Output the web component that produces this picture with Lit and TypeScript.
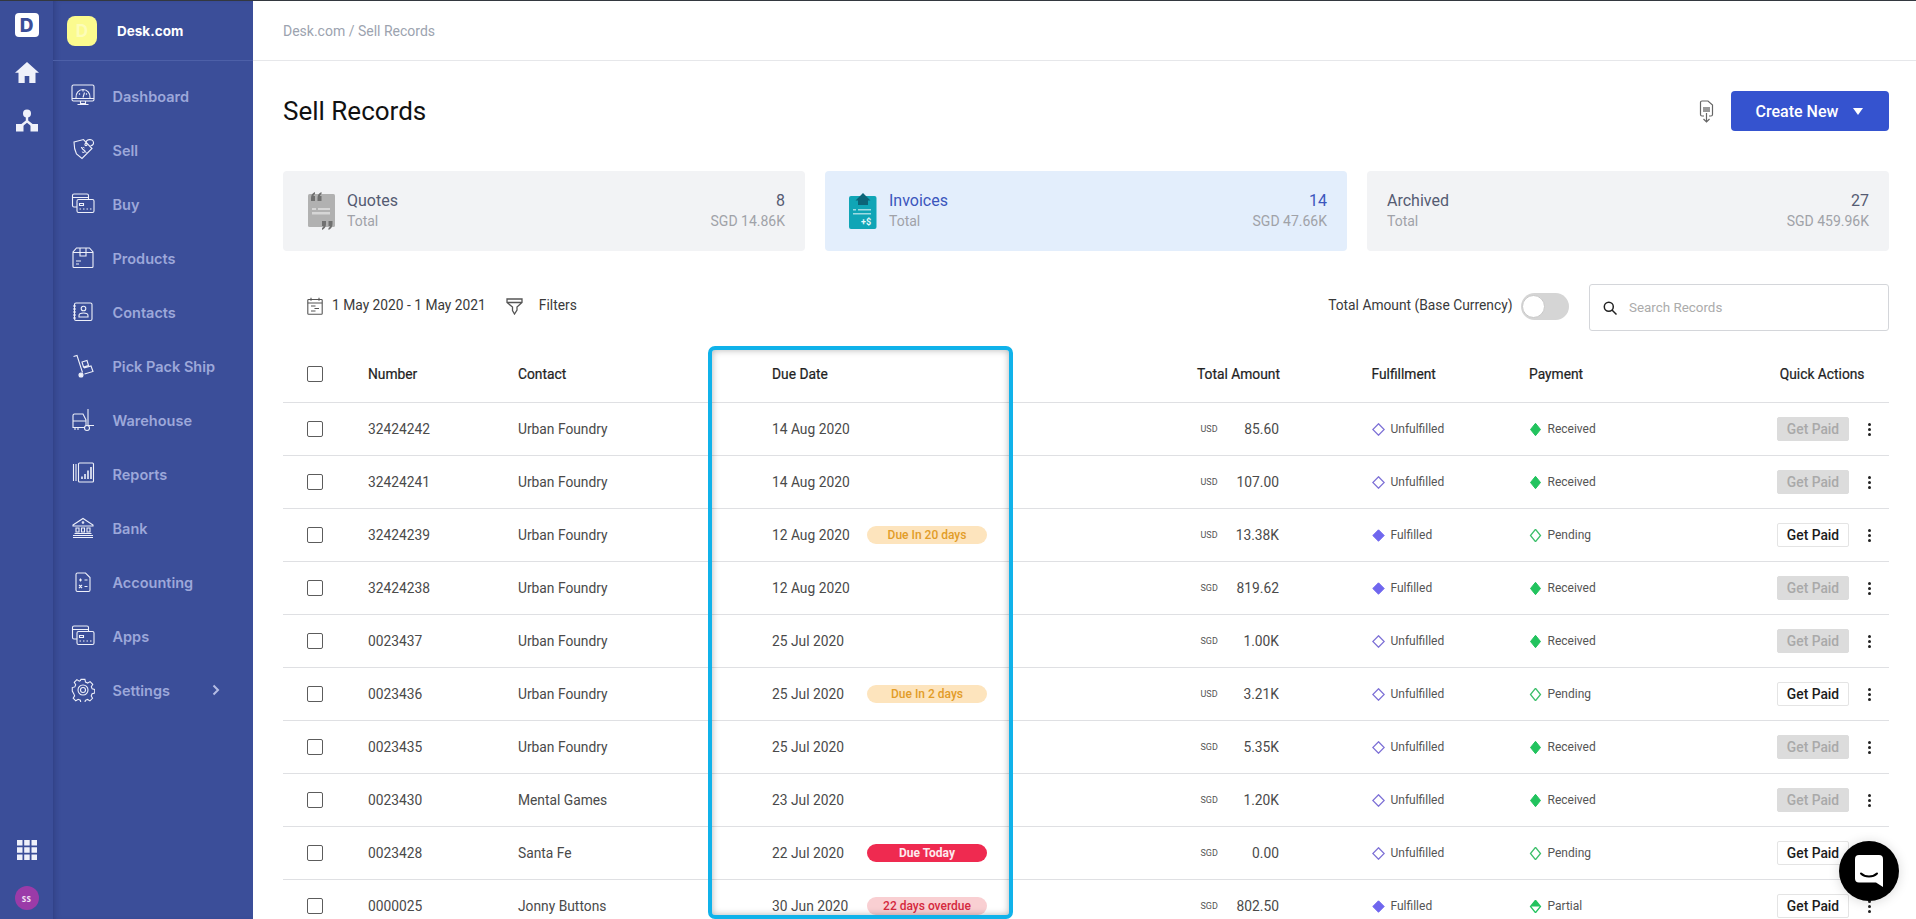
import { LitElement, html, css, svg } from "lit";
import { customElement } from "lit/decorators.js";

const navIcons: Record<string, unknown> = {
  dashboard: svg`<rect x="1" y="1" width="22" height="16" rx="1.5"/><path d="M1 14.5h22M5 14c-.6-5 3-8.5 7-8.5s7.6 3.5 7 8.5M12 13.500l1.500-5M8 9.500l1 1M16 9.500l-1 1M12 6v1.500"/><path d="M9.500 17v2.500h5V17M6.500 20.500h11"/>`,
  sell: svg`<path d="M3 4 12.500 1.500 21 10.500 11 20.500 5.500 16C3.500 12 3 8.500 3 4Z"/><circle cx="15" cy="6.500" r="1.100"/><path d="M15 5.500c-.5-4.500 7-5.500 7.500-1 .2 2-1.500 3-3 3.200"/><path d="M13.500 10c-1.200-1.200-3 0-2.200 1.200s2.800.4 2.800 1.800-2 2-3.200.8M10 9l5.500 6" stroke-width="1"/>`,
  buy: svg`<path d="M6 15H3a1.500 1.500 0 0 1-1.500-1.500V3.500A1.500 1.500 0 0 1 3 2h13a1.500 1.500 0 0 1 1.500 1.500V7M1.500 5.500h16"/><rect x="6" y="7.500" width="17" height="13" rx="1.500"/><path d="M8.500 11.500h4v2h-4zM8.500 17h1.500M12 17h1.500M15.500 17h1.500M19 17h1.500"/>`,
  products: svg`<path d="M5.500 2h13L22 6v14.500a1 1 0 0 1-1 1H3a1 1 0 0 1-1-1V6L5.500 2ZM2 6.500h20"/><path d="M9 2v8h6V2M5 15h5M5 18h3"/>`,
  contacts: svg`<rect x="3.500" y="3" width="17.500" height="17.500" rx="1.500"/><path d="M2 6h3M2 9h3M2 12h3M2 15h3M2 18h3"/><circle cx="12.500" cy="8.500" r="2.300"/><path d="M8 17v-1.500c0-1.500 2-2.500 4.500-2.500s4.500 1 4.500 2.500V17Z"/>`,
  pick: svg`<path d="M2.500 2.500 6 1.500l5.500 17"/><circle cx="10" cy="21" r="2" fill="currentColor"/><path d="m11 8 5-1.500 1.500 5-5 1.500ZM13 14l7-2 2 5.500-8.500 2.500"/>`,
  warehouse: svg`<path d="M17 1v16.500M17 17.500h6M2 20V7.500a1.500 1.500 0 0 1 1.500-1.500H12l3 6v6"/><path d="M2 13h13M2 19.500h11"/><circle cx="16" cy="20" r="2.500"/><path d="M4 22v-2M7 22v-2"/>`,
  reports: svg`<path d="M2.500 2v17M5 2v17"/><rect x="7.500" y="1" width="15" height="19" rx="1"/><path d="M11 17v-2.500M14 17v-5M17 17V8.500M20 17V5" stroke-width="1.600"/>`,
  bank: svg`<path d="M2 9 12 2.500 22 9v1H2ZM2 21.500h20M2 19.500h20M3.500 17.500h17"/><path d="M5 12h3v4H5zM10.500 12h3v4h-3zM16 12h3v4h-3z"/><circle cx="12" cy="6.500" r=".8"/>`,
  accounting: svg`<path d="M6.500 3h8l4.500 4.500v12.500a1.500 1.500 0 0 1-1.500 1.500h-11A1.500 1.500 0 0 1 5 20V4.500A1.500 1.500 0 0 1 6.500 3Z"/><path d="M8 10h3M9.500 8.500v3M13.500 10h3M8 15l3 3M11 15l-3 3M13.500 16.500h3M15 15v.1M15 18v.1"/>`,
  settings: svg`<path d="M10 2h4l.6 2.800 2.200 1 2.500-1.500 2.700 2.800-1.500 2.400.9 2.200 2.600.7v3.600l-2.700.7-.9 2.200 1.400 2.400-2.700 2.700-2.400-1.500-2.200.9-.6 2.600h-4l-.6-2.700-2.200-.9-2.400 1.500-2.700-2.700 1.500-2.400-.9-2.200L1.100 14v-3.600l2.600-.7.9-2.200L3.100 5.100l2.700-2.800 2.400 1.500 1.200-.6Z" transform="translate(.2 -.6) scale(.98)"/><circle cx="12" cy="12" r="5"/><circle cx="12" cy="12" r="2.500"/>`,
};

const nav = [
  ["Dashboard", "dashboard"], ["Sell", "sell"], ["Buy", "buy"], ["Products", "products"],
  ["Contacts", "contacts"], ["Pick Pack Ship", "pick"], ["Warehouse", "warehouse"], ["Reports", "reports"],
  ["Bank", "bank"], ["Accounting", "accounting"], ["Apps", "buy"], ["Settings", "settings"],
];

type Row = [string, string, string, string, string, string, string, string, string];
const rows: Row[] = [
  ["32424242", "Urban Foundry", "14 Aug 2020", "", "USD", "85.60", "Unfulfilled", "Received", "off"],
  ["32424241", "Urban Foundry", "14 Aug 2020", "", "USD", "107.00", "Unfulfilled", "Received", "off"],
  ["32424239", "Urban Foundry", "12 Aug 2020", "soon:Due In 20 days", "USD", "13.38K", "Fulfilled", "Pending", "on"],
  ["32424238", "Urban Foundry", "12 Aug 2020", "", "SGD", "819.62", "Fulfilled", "Received", "off"],
  ["0023437", "Urban Foundry", "25 Jul 2020", "", "SGD", "1.00K", "Unfulfilled", "Received", "off"],
  ["0023436", "Urban Foundry", "25 Jul 2020", "soon:Due In 2 days", "USD", "3.21K", "Unfulfilled", "Pending", "on"],
  ["0023435", "Urban Foundry", "25 Jul 2020", "", "SGD", "5.35K", "Unfulfilled", "Received", "off"],
  ["0023430", "Mental Games", "23 Jul 2020", "", "SGD", "1.20K", "Unfulfilled", "Received", "off"],
  ["0023428", "Santa Fe", "22 Jul 2020", "today:Due Today", "SGD", "0.00", "Unfulfilled", "Pending", "on"],
  ["0000025", "Jonny Buttons", "30 Jun 2020", "late:22 days overdue", "SGD", "802.50", "Fulfilled", "Partial", "on"],
];

const diamond = (kind: string) => {
  const d = "M6.500 .8 12.200 6.500 6.500 12.200 .8 6.500Z";
  const g = "M6.500 .3 11.500 6.500 6.500 12.700 1.500 6.500Z";
  if (kind === "Unfulfilled")
    return html`<svg class="dia" viewBox="0 0 13 13"><path d=${d} fill="#fff" stroke="#7d70d6" stroke-width="1.300"/></svg>`;
  if (kind === "Fulfilled")
    return html`<svg class="dia" viewBox="0 0 13 13"><path d=${d} fill="#6f66ee" stroke="#6f66ee"/></svg>`;
  if (kind === "Received")
    return html`<svg class="dia pay" viewBox="0 0 13 13"><path d=${g} fill="#22c35e" stroke="#22c35e"/></svg>`;
  if (kind === "Pending")
    return html`<svg class="dia pay" viewBox="0 0 13 13"><path d=${g} fill="#fff" stroke="#3cbf6a" stroke-width="1.300"/></svg>`;
  return html`<svg class="dia pay" viewBox="0 0 13 13"><path d=${g} fill="#fff" stroke="#22c35e" stroke-width="1.300"/><path d="M6.500 .3 11.500 6.500H1.500Z" fill="#22c35e"/></svg>`;
};

@customElement("app-root")
export class AppRoot extends LitElement {
  static styles = css`
    :host {
      display: flex; position: relative; box-sizing: border-box; width: 1916px; height: 919px; overflow: hidden;
      border-top: 1px solid #33383f; background: #fff; font-family: Roboto, "Liberation Sans", sans-serif; color: #333;
    }
    .rail {
      width: 53px; flex: none; background: #3b4e99; display: flex; flex-direction: column; align-items: center;
      padding: 12px 0 9px; box-sizing: border-box;
    }
    .logo {
      width: 24px; height: 24px; background: #fff; border-radius: 4px; display: flex; align-items: center; justify-content: center;
      font: 800 19px Inter, sans-serif; color: #3b4e99;
    }
    .rail svg { display: block; fill: #eff1fa; }
    .home { width: 24px; height: 21px; margin-top: 25px; }
    .net { width: 24px; height: 23px; margin-top: 26px; }
    .spacer { flex: 1; }
    .grid { width: 20px; height: 20px; }
    .avatar {
      width: 24px; height: 24px; margin-top: 26px; border-radius: 50%; background: #9b3ba8; color: #f1e4f4;
      font: 700 8px "Open Sans", sans-serif; display: flex; align-items: center; justify-content: center; letter-spacing: .4px;
    }
    .side { width: 200px; flex: none; background: #3b4e99; box-shadow: inset 5px 0 6px -4px rgba(20, 30, 80, .35); }
    .brand { height: 59px; border-bottom: 1px solid #4d60a8; display: flex; align-items: center; padding-left: 14px; box-sizing: content-box; }
    .brand-mark {
      width: 30px; height: 30px; border-radius: 8px; background: #fbfb8e; color: #fdfdb8; font: 700 17px Inter, sans-serif;
      display: flex; align-items: center; justify-content: center;
    }
    .brand-name { margin-left: 20px; font: 700 13.500px Inter, sans-serif; color: #fff; }
    .nav { padding-top: 8px; }
    .item { height: 54px; display: flex; align-items: center; padding-left: 18px; color: #9da8da; font: 600 14.500px Inter, sans-serif; }
    .item svg.ic { width: 24px; height: 24px; margin-right: 17.500px; fill: none; stroke: #eef0fa; color: #eef0fa; stroke-width: 1.100; flex: none; }
    .chev { margin-left: 42px; width: 8px; height: 12px; fill: none; stroke: #b5bde4; stroke-width: 2; }
    main { flex: 1; padding: 0 27px 0 30px; min-width: 0; }
    .crumb-bar { height: 59px; margin: 0 -27px 0 -30px; padding-left: 30px; border-bottom: 1px solid #e6e7ea; display: flex; align-items: center; color: #9ca3af; font-size: 14px; font-weight: 400; }
    .title-row { display: flex; align-items: center; height: 40px; margin-top: 30px; }
    h1 { margin: 0; font-size: 26px; font-weight: 400; color: #111; flex: 1; }
    .export { width: 15px; height: 24px; margin-right: 17px; fill: none; stroke: #666; stroke-width: 1.200; }
    .create {
      width: 158px; height: 40px; border: 0; border-radius: 4px; background: #3553cf; color: #fff; font: 500 16px Roboto, sans-serif;
      display: flex; align-items: center; padding: 0 0 0 24.500px; box-sizing: border-box;
    }
    .caret { margin-left: 15px; width: 0; height: 0; border: 5px solid transparent; border-top: 7px solid #fff; border-bottom: 0; }
    .cards { display: grid; grid-template-columns: repeat(3, 1fr); gap: 20px; margin-top: 40px; }
    .card { height: 80px; border-radius: 4px; background: #f2f3f5; display: flex; align-items: center; padding: 0 20px 0 24px; box-sizing: border-box; }
    .card.plain { padding-left: 20px; }
    .card.active { background: #e3eefc; padding-left: 24px; }
    .card-icon { width: 28px; height: 40px; margin-right: 12px; flex: none; }
    .card-text { flex: 1; }
    .name, .count { font-size: 16px; line-height: 20px; color: #555b72; }
    .sub { font-size: 14px; line-height: 20px; color: #a0a2a8; }
    .active .name, .active .count { color: #3b56bd; }
    .right { text-align: right; }
    .filters { display: flex; align-items: center; height: 47px; margin-top: 33px; font-size: 13.800px; color: #3a3a3a; }
    .filters .cal { width: 16px; height: 18px; margin: -4px 9px 0 24px; fill: none; stroke: #555; stroke-width: 1.100; }
    .filters .fun { width: 17px; height: 17px; margin: -3px 16px 0 20px; fill: none; stroke: #555; stroke-width: 1.300; }
    .filters span { position: relative; top: -3px; }
    .filters .grow { flex: 1; }
    .toggle { width: 48px; height: 27px; border-radius: 14px; background: #d5d5d5; margin: 0 20.500px 0 8px; position: relative; flex: none; top: -1px; }
    .toggle i { position: absolute; left: 1px; top: 2px; width: 21px; height: 21px; border-radius: 50%; background: #fff; border: 1px solid #c8c8c8; }
    .search { width: 300px; height: 47px; box-sizing: border-box; border: 1px solid #d4d6da; border-radius: 3px; display: flex; align-items: center; padding-left: 13px; }
    .search svg { width: 14px; height: 14px; fill: none; stroke: #222; stroke-width: 1.500; flex: none; }
    .search input { border: 0; outline: 0; padding: 0; margin-left: 12px; flex: 1; min-width: 0; font: 13.400px Roboto, sans-serif; background: transparent; }
    .search input::placeholder { color: #ababab; }
    .table { position: relative; margin-top: 15px; }
    .tr {
      display: grid; align-items: center; height: 53px; box-sizing: border-box; border-bottom: 1px solid #dfe0e3;
      grid-template-columns: 85px 150px 254px 425px 82px 92.500px 157.500px 248px 1fr; font-size: 13.800px; color: #4a4a4a;
    }
    .tr.head { height: 57px; color: #222; font-weight: 400; -webkit-text-stroke: .2px #222; }
    .box { width: 16px; height: 16px; margin-left: 24px; border: 1.500px solid #5c5c5c; border-radius: 2px; box-sizing: border-box; }
    .due { display: grid; grid-template-columns: 95px 120px; align-items: center; }
    .tag { height: 18px; border-radius: 9px; font-size: 12px; font-weight: 500; line-height: 18px; text-align: center; }
    .tag.soon { background: #fde4bd; color: #e29c28; }
    .tag.today { background: #ef2a50; color: #fdeaee; font-weight: 700; }
    .tag.late { background: #f9cfd2; color: #d5293e; }
    .amt { display: flex; align-items: center; justify-content: space-between; padding-left: 3.500px; }
    .cur { font-size: 9px; color: #555; }
    .amt-h { white-space: nowrap; text-align: right; }
    .st { display: flex; align-items: center; font-size: 12px; color: #555; }
    .dia { width: 13px; height: 13px; margin-right: 6px; flex: none; }
    .dia.pay { margin-right: 5.500px; }
    .acts { display: flex; align-items: center; }
    .btn { width: 72px; height: 24px; box-sizing: border-box; border-radius: 2px; text-align: center; font-size: 13.800px; font-weight: 500; line-height: 22px; }
    .btn.off { background: #dcdcdc; color: #a9a9a9; border: 1px solid #dcdcdc; }
    .btn.on { background: #fff; color: #1c1c1c; border: 1px solid #e4e4e4; }
    .dots { width: 3px; height: 13px; margin-left: 18.500px; fill: #222; }
    .qa { text-align: right; padding-right: 24.500px; white-space: nowrap; }
    .focus {
      position: absolute; left: 425px; top: 0; width: 305px; height: 572.500px; box-sizing: border-box; pointer-events: none;
      border: 4.500px solid #10b2ea; border-radius: 7px; box-shadow: inset 0 0 7px rgba(0, 0, 0, .3);
    }
    .chat {
      position: absolute; right: 17px; bottom: 18px; width: 60px; height: 60px; border-radius: 50%; background: #000;
      box-shadow: 0 1px 12px rgba(0, 0, 0, .15); display: flex; align-items: center; justify-content: center;
    }
    .chat svg { width: 28px; height: 32px; }
  `;

  render() {
    return html`
      <div class="rail">
        <div class="logo">D</div>
        <svg class="home" viewBox="0 0 24 21"><path d="M12 0 0 10.800h3.500V21h6.200v-7h4.600v7h6.200V10.800H24Z"/></svg>
        <svg class="net" viewBox="0 0 24 23"><circle cx="12" cy="4.500" r="4"/><path d="M10.800 7h2.400v4.600l5 4-1.500 1.900-4.700-3.800-4.700 3.800-1.500-1.900 5-4Z"/><rect x="1" y="15" width="7.500" height="7.500"/><rect x="15.500" y="15" width="7.500" height="7.500"/></svg>
        <div class="spacer"></div>
        <svg class="grid" viewBox="0 0 20 20"><path d="M0 0h5.500v5.500H0zM7.200 0h5.500v5.500H7.200zM14.500 0H20v5.500h-5.500zM0 7.200h5.500v5.500H0zM7.200 7.200h5.500v5.500H7.200zM14.500 7.200H20v5.500h-5.500zM0 14.500h5.500V20H0zM7.200 14.500h5.500V20H7.200zM14.500 14.500H20V20h-5.500z"/></svg>
        <div class="avatar">SS</div>
      </div>
      <div class="side">
        <div class="brand"><div class="brand-mark">D</div><div class="brand-name">Desk.com</div></div>
        <div class="nav">
          ${nav.map(([label, ic]) => html`<div class="item">
            <svg class="ic" viewBox="0 0 24 24">${navIcons[ic]}</svg><span>${label}</span>
            ${label === "Settings" ? html`<svg class="chev" viewBox="0 0 8 12"><path d="M1.500 1.500 6 6l-4.500 4.500"/></svg>` : ""}
          </div>`)}
        </div>
      </div>
      <main>
        <div class="crumb-bar">Desk.com / Sell Records</div>
        <div class="title-row">
          <h1>Sell Records</h1>
          <svg class="export" viewBox="0 0 15 24"><path d="M5 17H3a1.500 1.500 0 0 1-1.500-1.500v-12A1.500 1.500 0 0 1 3 2h6l4.500 4v9.500A1.500 1.500 0 0 1 12 17h-2"/><rect x="4" y="8" width="7" height="5" fill="#999" stroke="none"/><path d="M7.500 14v9M4.500 20l3 3 3-3"/></svg>
          <div class="create">Create New<i class="caret"></i></div>
        </div>
        <div class="cards">
          <div class="card">
            <svg class="card-icon" viewBox="0 0 28 40">
              <rect x="1" y="3" width="27" height="33" rx="1.500" fill="#b1b1b1"/>
              <rect x="5" y="17" width="4" height="2" fill="#d6d6d6"/><rect x="11" y="17" width="12" height="2" fill="#d6d6d6"/><rect x="5" y="21" width="18" height="2.500" fill="#d6d6d6"/>
              <path d="M4 7c0-3 1.500-5 4-6v2C7 3.500 6.500 4.500 6.500 5H8v5H4ZM10.500 7c0-3 1.500-5 4-6v2c-1 .5-1.500 1.500-1.500 2h1.500v5h-4Z" fill="#707070"/>
              <path d="M25.500 33c0 3-1.500 5-4 6v-2c1-.5 1.500-1.500 1.500-2h-1.500v-5h4ZM19 33c0 3-1.500 5-4 6v-2c1-.5 1.500-1.500 1.500-2H15v-5h4Z" fill="#707070"/>
            </svg>
            <div class="card-text"><div class="name">Quotes</div><div class="sub">Total</div></div>
            <div class="right"><div class="count">8</div><div class="sub">SGD 14.86K</div></div>
          </div>
          <div class="card active">
            <svg class="card-icon" viewBox="0 0 28 40">
              <rect x="0" y="5" width="27.500" height="33" rx="2" fill="#10a5b6"/>
              <path d="M14 2 21.500 9.500H19V14H9V9.500H6.500Z" fill="#0c6478"/>
              <rect x="4" y="18" width="3" height="1.500" fill="#9fdbe2"/><rect x="9" y="18" width="13" height="1.500" fill="#9fdbe2"/><rect x="4" y="22" width="18" height="1.500" fill="#9fdbe2"/>
              <text x="12" y="33.500" font-family="Roboto, sans-serif" font-size="9" font-weight="700" fill="#e8f8fa">+$</text>
            </svg>
            <div class="card-text"><div class="name">Invoices</div><div class="sub">Total</div></div>
            <div class="right"><div class="count">14</div><div class="sub">SGD 47.66K</div></div>
          </div>
          <div class="card plain">
            <div class="card-text"><div class="name">Archived</div><div class="sub">Total</div></div>
            <div class="right"><div class="count">27</div><div class="sub">SGD 459.96K</div></div>
          </div>
        </div>
        <div class="filters">
          <svg class="cal" viewBox="0 0 16 18"><rect x=".8" y="2.500" width="14.400" height="14.700" rx=".8"/><path d="M.8 6h14.400M4 .8v3M12 .8v3M4 9h4.500M7.500 11.500h4.500M4 14h4.500"/></svg>
          <span>1 May 2020 - 1 May 2021</span>
          <svg class="fun" viewBox="0 0 17 17"><path d="M1 1h15v3.500l-5 4.500v3L8.500 16 6.500 12.500V9L1 4.500ZM1 4.500h15"/></svg>
          <span>Filters</span>
          <div class="grow"></div>
          <span>Total Amount (Base Currency)</span>
          <div class="toggle"><i></i></div>
          <div class="search">
            <svg viewBox="0 0 14 14"><circle cx="5.800" cy="5.800" r="4.500"/><path d="M9 9l4.500 4.500"/></svg>
            <input placeholder="Search Records" />
          </div>
        </div>
        <div class="table">
          <div class="tr head">
            <div class="box"></div><div>Number</div><div>Contact</div><div>Due Date</div>
            <div class="amt-h">Total Amount</div><div></div><div>Fulfillment</div><div>Payment</div>
            <div class="qa">Quick Actions</div>
          </div>
          ${rows.map((r) => {
            const [kind, text] = r[3] ? r[3].split(":") : ["", ""];
            return html`<div class="tr">
              <div class="box"></div><div>${r[0]}</div><div>${r[1]}</div>
              <div class="due"><span>${r[2]}</span>${text ? html`<span class="tag ${kind}">${text}</span>` : ""}</div>
              <div class="amt"><span class="cur">${r[4]}</span><span>${r[5]}</span></div><div></div>
              <div class="st">${diamond(r[6])}${r[6]}</div>
              <div class="st">${diamond(r[7])}${r[7]}</div>
              <div class="acts"><div class="btn ${r[8]}">Get Paid</div><svg class="dots" viewBox="0 0 3 13"><circle cx="1.500" cy="1.500" r="1.500"/><circle cx="1.500" cy="6.500" r="1.500"/><circle cx="1.500" cy="11.500" r="1.500"/></svg></div>
            </div>`;
          })}
          <div class="focus"></div>
        </div>
      </main>
      <div class="chat">
        <svg viewBox="0 0 28 32"><path d="M4 0h20a4 4 0 0 1 4 4v28l-7-4.500H4a4 4 0 0 1-4-4V4a4 4 0 0 1 4-4Z" fill="#fff"/><path d="M6 18.500c4 4 12 4 16 0" fill="none" stroke="#000" stroke-width="2" stroke-linecap="round"/></svg>
      </div>
    `;
  }
}
